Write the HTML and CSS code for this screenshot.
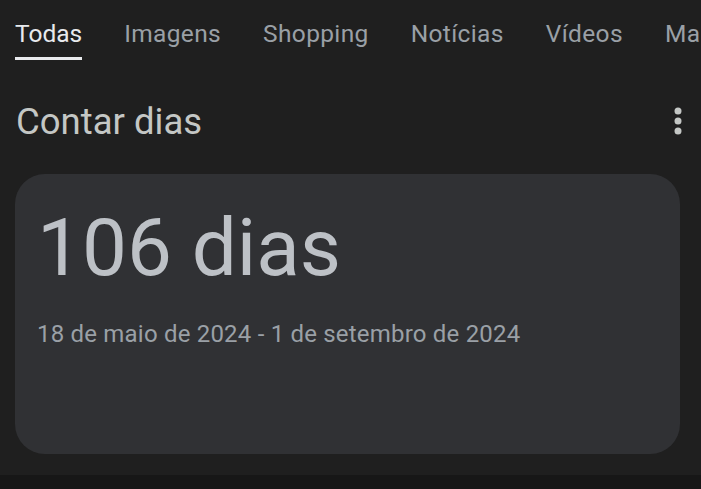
FILE: index.html
```html
<!DOCTYPE html>
<html>
<head>
    <title>Contar dias</title>
    <link rel="stylesheet" href="styles.css">
</head>
<body>
    <div class="page">
        <nav class="tabs">
            <a class="tab active">Todas</a>
            <a class="tab">Imagens</a>
            <a class="tab">Shopping</a>
            <a class="tab">Notícias</a>
            <a class="tab">Vídeos</a>
            <a class="tab">Mais</a>
        </nav>
        <div class="header">
            <h1>Contar dias</h1>
            <svg class="more" width="8" height="30" viewBox="0 0 8 30">
                <circle cx="4" cy="5" r="3.5" fill="#c4c7c5"/>
                <circle cx="4" cy="15" r="3.5" fill="#c4c7c5"/>
                <circle cx="4" cy="25" r="3.5" fill="#c4c7c5"/>
            </svg>
        </div>
        <div class="card">
            <div class="result">106 dias</div>
            <div class="range">18 de maio de 2024 - 1 de setembro de 2024</div>
        </div>
    </div>
    <div class="footer"></div>
</body>
</html>
```

FILE: styles.css
```css
body {
    margin: 0;
    background-color: #1f1f1f;
    font-family: Roboto, "Noto Sans", Arial, sans-serif;
    overflow: hidden;
}
.page {
    padding: 0 21px 0 15px;
    height: 475px;
    box-sizing: border-box;
}
.tabs {
    display: flex;
    gap: 42px;
    white-space: nowrap;
    height: 60px;
    margin-right: -21px;
    overflow: hidden;
}
.tab {
    font-size: 24.5px;
    letter-spacing: 0.35px;
    color: #9aa0a6;
    padding-top: 19px;
    box-sizing: border-box;
    height: 60px;
}
.tab.active {
    color: #e8eaed;
    letter-spacing: 0;
    border-bottom: 3px solid #e8eaed;
}
.header {
    display: flex;
    align-items: center;
    justify-content: space-between;
    margin-top: 40px;
    height: 42px;
}
h1 {
    margin: 0;
    font-size: 36.5px;
    font-weight: 400;
    color: #c4c7c5;
    padding-left: 1px;
}
.more {
    margin-right: -2px;
}
.card {
    margin-top: 32px;
    background-color: #303134;
    border-radius: 30px;
    height: 280px;
    padding: 24px 22px;
    box-sizing: border-box;
}
.result {
    font-size: 80px;
    color: #bdc1c6;
    line-height: 100px;
}
.range {
    margin-top: 22px;
    font-size: 24px;
    letter-spacing: 0.2px;
    color: #9aa0a6;
}
.footer {
    background-color: #171717;
    height: 14px;
}
```
